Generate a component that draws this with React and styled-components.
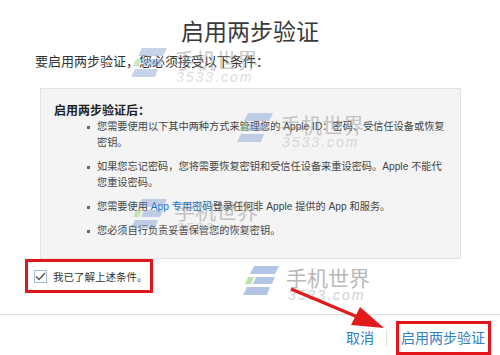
import React from "react";
import styled, { createGlobalStyle } from "styled-components";

const GlobalStyle = createGlobalStyle`
  html, body {
    margin: 0;
    padding: 0;
    background: #fff;
  }
  body {
    font-family: "Liberation Sans", "Noto Sans CJK SC", sans-serif;
    color: #333;
  }
`;

const marks = [
  { x: 131, y: 48, o: 0.45 },
  { x: 237, y: 113, o: 0.45 },
  { x: 131, y: 199, o: 0.45 },
  { x: 243, y: 266, o: 0.6 },
];

function App() {
  const items = [
    <>您需要使用以下其中两种方式来管理您的 Apple ID：密码、受信任设备或恢复密钥。</>,
    <>如果您忘记密码，您将需要恢复密钥和受信任设备来重设密码。Apple 不能代您重设密码。</>,
    <>您需要使用 <Link>App 专用密码</Link>登录任何非 Apple 提供的 App 和服务。</>,
    <>您必须自行负责妥善保管您的恢复密钥。</>,
  ];

  return (
    <>
      <GlobalStyle />
      <Page>
        <Title>启用两步验证</Title>
        <Intro>要启用两步验证，您必须接受以下条件：</Intro>
        <TermsBox>
          <TermsHeading>启用两步验证后：</TermsHeading>
          <TermsList>
            {items.map((text, i) => (
              <TermsItem key={i}>
                <Dot />
                <span>{text}</span>
              </TermsItem>
            ))}
          </TermsList>
        </TermsBox>
        <Highlight $left={25}>
          <AgreeRow>
            <CheckBox>
              <svg width="11" height="9" viewBox="0 0 11 9">
                <path d="M1 4.5 L4 7.5 L10 1" fill="none" stroke="#555" strokeWidth="1.4" />
              </svg>
            </CheckBox>
            我已了解上述条件。
          </AgreeRow>
        </Highlight>
        <Divider />
        <Footer>
          <FooterButton>取消</FooterButton>
          <Separator />
          <Highlight>
            <FooterButton>启用两步验证</FooterButton>
          </Highlight>
        </Footer>

        {marks.map((m, i) => (
          <Watermark key={i} $opacity={m.o} style={{ left: m.x, top: m.y }}>
            <svg width="36" height="30" viewBox="0 0 36 30">
              <polygon points="11,0 36,0 32,8 7,8" fill="#7fa0d4" />
              <polygon points="5,11 11,11 8,18 2,18" fill="#8fcf7a" />
              <polygon points="13,11 32,11 29,18 10,18" fill="#7fa0d4" />
              <polygon points="4,21 27,21 24,29 0,29" fill="#7fa0d4" />
            </svg>
            <MarkText>
              <MarkName>手机世界</MarkName>
              <MarkSite>3533.com</MarkSite>
            </MarkText>
          </Watermark>
        ))}

        <Arrow width="500" height="355" viewBox="0 0 500 355">
          <line x1="291" y1="289" x2="360" y2="318" stroke="#e21a1a" strokeWidth="3.2" />
          <polygon points="384,328 351,325 360,307" fill="#e21a1a" />
        </Arrow>
      </Page>
    </>
  );
}

const Page = styled.div`
  position: relative;
  width: 500px;
  height: 355px;
  overflow: hidden;
  display: flex;
  flex-direction: column;
  align-items: flex-start;
`;

const Title = styled.h1`
  align-self: stretch;
  margin: 17px 0 0;
  text-align: center;
  font-size: 23px;
  line-height: 30px;
  font-weight: normal;
  color: #3a3a3a;
`;

const Intro = styled.p`
  margin: 6px 0 0 35px;
  font-size: 13px;
  line-height: 18px;
  color: #333;
`;

const TermsBox = styled.div`
  box-sizing: border-box;
  width: 421px;
  margin: 17px 0 0 40px;
  padding: 14px 14px 19px 13px;
  background: #f4f4f4;
  border: 1px solid #e3e3e3;
`;

const TermsHeading = styled.h2`
  margin: 0;
  font-size: 12px;
  line-height: 16px;
  font-weight: bold;
  color: #222;
`;

const TermsList = styled.ul`
  list-style: none;
  margin: 0;
  padding: 0 0 0 33px;
`;

const TermsItem = styled.li`
  display: grid;
  grid-template-columns: 10px 1fr;
  font-size: 10.2px;
  line-height: 16px;
  color: #444;
  margin-bottom: 8px;

  &:last-child {
    margin-bottom: 0;
  }
`;

const Dot = styled.i`
  width: 3px;
  height: 3px;
  margin-top: 7px;
  background: #666;
`;

const Link = styled.span`
  color: #0a72c8;
`;

const Highlight = styled.div`
  margin-left: ${(p) => (p.$left ? `${p.$left}px` : "0")};
  border: 3px solid #e3161b;
`;

const AgreeRow = styled.label`
  display: flex;
  align-items: center;
  gap: 6px;
  height: 28px;
  padding: 0 2px 0 6px;
  font-size: 10.5px;
  color: #333;
`;

const CheckBox = styled.span`
  box-sizing: border-box;
  width: 13px;
  height: 13px;
  border: 1px solid #a8b8d0;
  background: #fff;
  display: flex;
  align-items: center;
  justify-content: center;
`;

const Divider = styled.hr`
  align-self: stretch;
  margin: 21px 0 0;
  border: none;
  border-top: 1px solid #dcdcdc;
`;

const Footer = styled.div`
  align-self: stretch;
  display: flex;
  justify-content: flex-end;
  align-items: center;
  gap: 9px;
  margin-top: 6px;
  padding-right: 9px;
`;

const FooterButton = styled.span`
  display: block;
  padding: 0 3px 0 2px;
  font-size: 14px;
  line-height: 28px;
  color: #2f80c4;
`;

const Separator = styled.span`
  width: 1px;
  height: 16px;
  background: #e0e0e0;
`;

const Watermark = styled.div`
  position: absolute;
  display: flex;
  gap: 7px;
  opacity: ${(p) => p.$opacity};
  pointer-events: none;
`;

const MarkText = styled.div`
  display: flex;
  flex-direction: column;
`;

const MarkName = styled.span`
  font-family: "Noto Sans CJK SC", sans-serif;
  font-size: 21px;
  line-height: 22px;
  color: #8a8a8a;
`;

const MarkSite = styled.span`
  font-family: "Liberation Sans", sans-serif;
  font-style: italic;
  font-size: 14px;
  line-height: 14px;
  letter-spacing: 2px;
  padding-left: 2px;
  color: #b5b5b5;
`;

const Arrow = styled.svg`
  position: absolute;
  left: 0;
  top: 0;
  pointer-events: none;
`;

export default App;
